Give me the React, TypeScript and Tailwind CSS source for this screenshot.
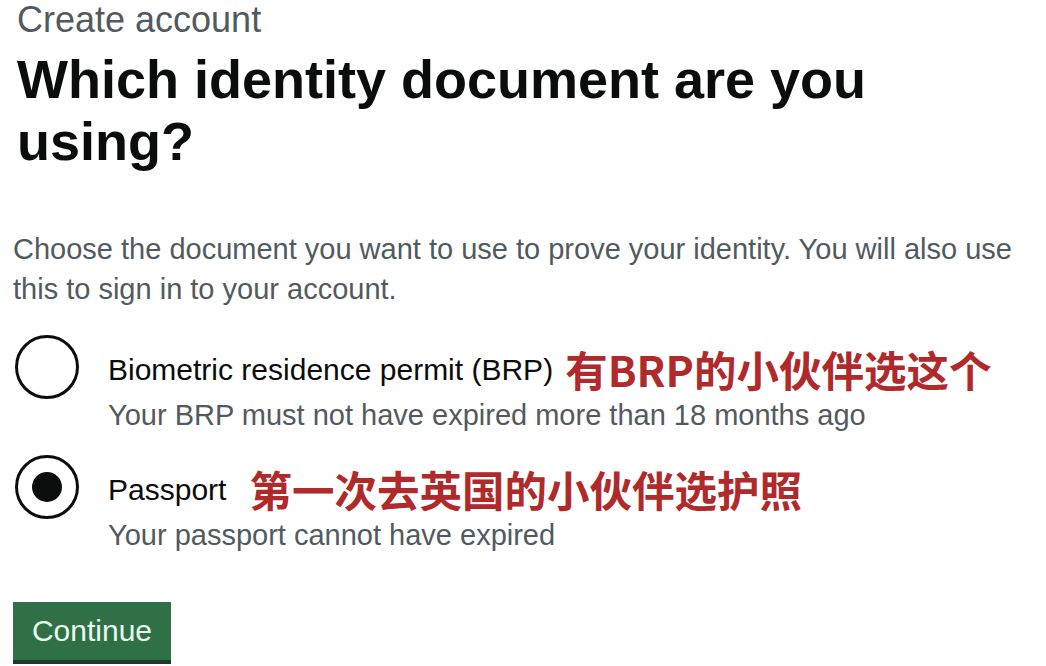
import React from "react";

const options = [
  {
    id: "brp",
    label: "Biometric residence permit (BRP)",
    hint: "Your BRP must not have expired more than 18 months ago",
    note: "有BRP的小伙伴选这个",
    noteGap: "ml-[12px]",
    checked: false,
  },
  {
    id: "passport",
    label: "Passport",
    hint: "Your passport cannot have expired",
    note: "第一次去英国的小伙伴选护照",
    noteGap: "ml-[23px]",
    checked: true,
  },
];

const Radio: React.FC<{ checked: boolean }> = ({ checked }) => (
  <div className="w-[64px] h-[64px] shrink-0 rounded-full border-[3px] border-[#0b0c0c] bg-white flex items-center justify-center">
    {checked && <div className="w-[30px] h-[30px] rounded-full bg-[#0b0c0c]" />}
  </div>
);

export default function App() {
  return (
    <div className="w-[1046px] h-[666px] bg-white overflow-hidden font-['Liberation_Sans',sans-serif] text-[#0b0c0c]">
      <div className="pl-[17px]">
        <span className="block text-[36px] leading-[40px] text-[#505a5f]">Create account</span>
        <h1 className="text-[54px] leading-[62px] font-bold mt-[8px]">
          Which identity document are you
          <br />
          using?
        </h1>
      </div>

      <p className="pl-[13px] mt-[57px] text-[29px] leading-[40px] text-[#505a5f] w-[1028px]">
        Choose the document you want to use to prove your identity. You will also use this to sign in to your account.
      </p>

      <div className="pl-[15px] mt-[26px] flex flex-col gap-[20px]">
        {options.map((o) => (
          <div key={o.id} className="flex gap-[29px]">
            <Radio checked={o.checked} />
            <div className="pt-[15px]">
              <div className="flex items-center h-[40px]">
                <span className="text-[30px] leading-[40px]">{o.label}</span>
                <span
                  className={`${o.noteGap} -mt-[3px] text-[42.5px] leading-[40px] font-bold text-[#b02a2c] font-['Noto_Sans_CJK_SC',sans-serif]`}
                >
                  {o.note}
                </span>
              </div>
              <span className="block text-[29px] leading-[40px] text-[#505a5f] mt-[5px]">{o.hint}</span>
            </div>
          </div>
        ))}
      </div>

      <button className="ml-[13px] mt-[47px] w-[158px] h-[58px] bg-[#2f7047] text-[#e9fbef] text-[30px] leading-none shadow-[0_4px_0_#1b3d27]">
        Continue
      </button>
    </div>
  );
}
